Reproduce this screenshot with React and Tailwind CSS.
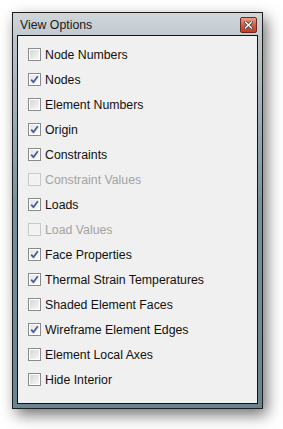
import React from 'react';

const options = [
  { label: 'Node Numbers', checked: false },
  { label: 'Nodes', checked: true },
  { label: 'Element Numbers', checked: false },
  { label: 'Origin', checked: true },
  { label: 'Constraints', checked: true },
  { label: 'Constraint Values', checked: false, disabled: true },
  { label: 'Loads', checked: true },
  { label: 'Load Values', checked: false, disabled: true },
  { label: 'Face Properties', checked: true },
  { label: 'Thermal Strain Temperatures', checked: true },
  { label: 'Shaded Element Faces', checked: false },
  { label: 'Wireframe Element Edges', checked: true },
  { label: 'Element Local Axes', checked: false },
  { label: 'Hide Interior', checked: false },
];

const CheckBox = ({ checked, disabled }) => (
  <div
    className={
      'w-[13px] h-[13px] border p-px shrink-0 ' +
      (disabled ? 'border-[#c9c9c9] bg-[#f4f4f4]' : 'border-[#8a8a8a] bg-white')
    }
  >
    <div
      className={
        'w-full h-full flex items-center justify-center ' +
        (disabled
          ? 'bg-[#f2f2f2]'
          : checked
          ? 'bg-gradient-to-br from-[#e4e4e4] to-[#fbfbfb]'
          : 'bg-gradient-to-br from-[#d6d6d6] to-[#f8f8f8]')
      }
    >
      {checked && (
        <svg width="9" height="9" viewBox="0 0 9 9">
          <path d="M1.2 4.6 L3.4 7.2 L7.8 1.2" fill="none" stroke="#4a5c98" strokeWidth="1.8" strokeLinejoin="round" />
        </svg>
      )}
    </div>
  </div>
);

const App = () => {
  return (
    <div className="w-[283px] h-[429px] bg-white pt-[12px] pl-[12px]" style={{ fontFamily: '"Liberation Sans", Arial, sans-serif' }}>
      <div className="w-[251px] h-[397px] border border-[#1e1e1e] bg-gradient-to-b from-[#c6ced3] via-[#75909b] to-[#68848f] shadow-[4px_6px_14px_rgba(0,0,0,0.55)] flex flex-col">
        {/* title bar */}
        <div className="h-[22px] flex items-start justify-between pl-[7px] pr-[5px] bg-gradient-to-b from-[#d0d6da] to-[#c2cacf]">
          <span className="text-[12.3px] text-[#1a1a1a] leading-none mt-[6px]">View Options</span>
          <div className="w-[17px] h-[16px] mt-[4px] rounded-[2px] border border-[#6b2a20] bg-gradient-to-b from-[#eaa28c] via-[#d35a3f] to-[#c23d23] flex items-center justify-center">
            <svg width="9" height="8" viewBox="0 0 9 8">
              <path d="M1.5 1 L7.5 7 M7.5 1 L1.5 7" stroke="#3a3a3a" strokeWidth="3" strokeLinecap="square" />
              <path d="M1.5 1 L7.5 7 M7.5 1 L1.5 7" stroke="#ffffff" strokeWidth="1.4" strokeLinecap="square" />
            </svg>
          </div>
        </div>
        {/* client area */}
        <div className="flex-1 mx-[4px] mb-[4px] border border-[#111] bg-[#f0f0f0] pt-[6px] pl-[10px]">
          {options.map((o) => (
            <div key={o.label} className="h-[25px] flex items-center gap-[4px]">
              <CheckBox checked={o.checked} disabled={o.disabled} />
              <span className={'text-[12.3px] leading-none mt-[1px] ' + (o.disabled ? 'text-[#a3a3a3]' : 'text-[#101010]')}>
                {o.label}
              </span>
            </div>
          ))}
        </div>
      </div>
    </div>
  );
};

export default App;
